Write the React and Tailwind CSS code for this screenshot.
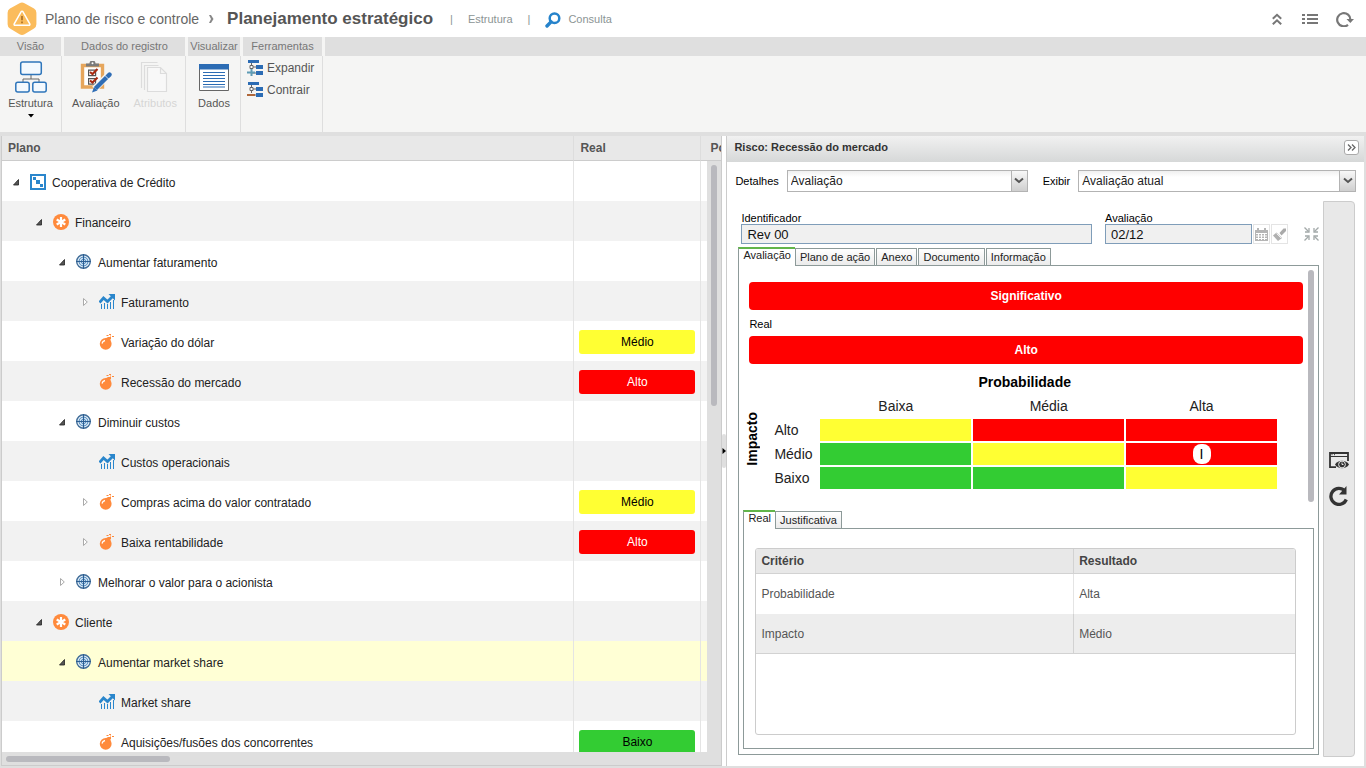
import { useState } from 'react';
import clsx from 'clsx';

const ROWS = [
  { level: 0, toggle: 'open', icon: 'plan', label: 'Cooperativa de Crédito' },
  { level: 1, toggle: 'open', icon: 'perspective', label: 'Financeiro' },
  { level: 2, toggle: 'open', icon: 'goal', label: 'Aumentar faturamento' },
  { level: 3, toggle: 'closed', icon: 'indicator', label: 'Faturamento' },
  { level: 3, icon: 'risk', label: 'Variação do dólar', real: 'Médio' },
  { level: 3, icon: 'risk', label: 'Recessão do mercado', real: 'Alto' },
  { level: 2, toggle: 'open', icon: 'goal', label: 'Diminuir custos' },
  { level: 3, icon: 'indicator', label: 'Custos operacionais' },
  { level: 3, toggle: 'closed', icon: 'risk', label: 'Compras acima do valor contratado', real: 'Médio' },
  { level: 3, toggle: 'closed', icon: 'risk', label: 'Baixa rentabilidade', real: 'Alto' },
  { level: 2, toggle: 'closed', icon: 'goal', label: 'Melhorar o valor para o acionista' },
  { level: 1, toggle: 'open', icon: 'perspective', label: 'Cliente' },
  { level: 2, toggle: 'open', icon: 'goal', label: 'Aumentar market share', selected: true },
  { level: 3, icon: 'indicator', label: 'Market share' },
  { level: 3, icon: 'risk', label: 'Aquisições/fusões dos concorrentes', real: 'Baixo' },
];

const INDENT = ['pl-[8px]', 'pl-[31px]', 'pl-[54px]', 'pl-[77px]'];

const LEVEL_COLORS = {
  Baixo: 'bg-[#33cc33] text-black',
  Médio: 'bg-[#ffff33] text-black',
  Alto: 'bg-[#ff0000] text-white',
};

const MATRIX = [
  { label: 'Alto', cells: ['Médio', 'Alto', 'Alto'] },
  { label: 'Médio', cells: ['Baixo', 'Médio', 'Alto'], mark: 2 },
  { label: 'Baixo', cells: ['Baixo', 'Baixo', 'Médio'] },
];

/* ---------- icons ---------- */

function Svg({ size = 16, width, height, children, className }) {
  const w = width || size;
  const h = height || size;
  return (
    <svg
      width={w}
      height={h}
      viewBox={`0 0 ${w} ${h}`}
      fill="none"
      aria-hidden="true"
      className={clsx('block shrink-0', className)}
    >
      {children}
    </svg>
  );
}

function LogoIcon() {
  return (
    <Svg width={30} height={34}>
      <path
        d="M12.500 1.200a5 5 0 0 1 5 0l9.500 5.400a5 5 0 0 1 2.400 4.300v11.400a5 5 0 0 1-2.400 4.300l-9.500 5.600a5 5 0 0 1-5 0L3 26.600a5 5 0 0 1-2.400-4.300V10.900A5 5 0 0 1 3 6.600z"
        fill="#fbbc5c"
      />
      <path d="M14.200 9.600a1 1 0 0 1 1.700 0l6.900 12.200a1 1 0 0 1-.8 1.500H8a1 1 0 0 1-.8-1.500z" stroke="#fff" strokeWidth="1.500" />
      <path d="M15 14v4.300M15 19.500v1.800" stroke="#b5792a" strokeWidth="1.900" />
    </Svg>
  );
}

function SearchIcon() {
  return (
    <Svg>
      <circle cx="9.500" cy="6.200" r="4.800" stroke="#2683cb" strokeWidth="2.500" />
      <path d="M6 9.800 2 14" stroke="#2683cb" strokeWidth="3.400" strokeLinecap="round" />
    </Svg>
  );
}

function StructureIcon() {
  return (
    <Svg size={32}>
      <path d="M16 14v4M8 21v-3h16v3" stroke="#666" />
      <g fill="#f3f9fe" stroke="#2f76bb" strokeWidth="1.500">
        <rect x="5.700" y="1" width="20.600" height="12.600" rx="2" />
        <rect x=".8" y="21.300" width="13.400" height="9.600" rx="2" />
        <rect x="17.800" y="21.300" width="13.400" height="9.600" rx="2" />
      </g>
    </Svg>
  );
}

function ClipboardIcon() {
  return (
    <Svg size={32}>
      <path d="M2.500 4.500h20v21.500h-20z" fill="#fff" stroke="#e6a65c" strokeWidth="3.400" />
      <path d="M6 5.500h13v-3h-3.500a3 3 0 0 0-6 0H6z" fill="#7b7b7b" />
      <circle cx="12.500" cy="2.200" r="1" fill="#fff" />
      <path d="M8.600 9.100h7v5.500h-7zM8.600 17.600h7v5.500h-7z" fill="#fff" stroke="#555" strokeWidth="1.200" />
      <path d="m10 11 2.500 2 5-5M10 19.500l2.500 2 5-5" stroke="#a92b12" strokeWidth="2.200" />
      <path d="m14.500 28 12.500-12.500" stroke="#f5f5f4" strokeWidth="6.500" />
      <path d="m15.500 27.500 11-11" stroke="#2f6db5" strokeWidth="4.400" />
      <path d="m27.300 15.800 2.200-2.200" stroke="#2f6db5" strokeWidth="4.400" strokeLinecap="round" />
      <path d="m12 31.500 2-5.500 3.500 3.500z" fill="#2f6db5" />
      <path d="m25 14.500 4 4" stroke="#fff" strokeWidth=".8" />
    </Svg>
  );
}

function PagesIcon() {
  return (
    <Svg size={32}>
      <g stroke="#dcdcdc" strokeWidth="1.200">
        <path d="M2.500 27V1.500h16M5.500 29V4.500h14" />
        <path d="M8.500 6.500h13l6 6v18h-19zM21.500 6.500v6h6" fill="#f8f8f8" />
      </g>
    </Svg>
  );
}

function DataIcon() {
  return (
    <Svg size={32}>
      <path d="M1.500 4.500h29v25h-29z" fill="#fff" stroke="#666" />
      <path d="M1 3h30v5.500H1z" fill="#2c6cb4" />
      <path d="M5 11.500h22M5 14.500h22M5 17.500h22M5 20.500h22M5 23.500h22M5 26h22" stroke="#2c6cb4" strokeWidth="1.200" />
    </Svg>
  );
}

function ExpandIcon({ minus }) {
  return (
    <Svg>
      <path d="M1 0h11v3H1zM9 5h7v4H9zM9 11h7v4H9z" fill="#2c6cb4" />
      <path d="M4.500 3v8M4.500 7H9M4.500 13H9" stroke="#666" />
      <path d="M3 5.500h3v3H3z" fill="#fff" stroke="#666" />
      {minus ? (
        <path d="M0 13h8" stroke="#b0673a" strokeWidth="2" />
      ) : (
        <path d="M0 12.500h8M4.500 9v7" stroke="#5f9cb5" strokeWidth="2" />
      )}
    </Svg>
  );
}

function PlanIcon() {
  return (
    <Svg>
      <path d="M1 1h14v14H1z" fill="#fff" stroke="#2a86cc" strokeWidth="2" />
      <path d="M3 3h3v3H3zM6 6h4v4H6zM10 10h3v3h-3z" fill="#2a86cc" />
    </Svg>
  );
}

function PerspectiveIcon() {
  return (
    <Svg>
      <circle cx="8" cy="8" r="8" fill="#ff8a3c" />
      <path d="M8 3v10M3.700 5.500l8.600 5M3.700 10.500l8.600-5" stroke="#fff" strokeWidth="2.200" />
    </Svg>
  );
}

function GoalIcon() {
  return (
    <Svg>
      <circle cx="7.500" cy="7.500" r="6.800" fill="#e4eff8" stroke="#3f6c98" strokeWidth="1.400" />
      <circle cx="7.500" cy="7.500" r="4.500" fill="#c9dff1" stroke="#4b86bd" />
      <circle cx="7.500" cy="7.500" r="2.200" fill="#e4eff8" stroke="#4b86bd" />
      <path d="M7.500 0v15M0 7.500h15" stroke="#2c5e92" />
    </Svg>
  );
}

function IndicatorIcon() {
  return (
    <Svg>
      <path d="m.5 8.500 4-4.500 4 3.500 5-5" stroke="#2a86cc" strokeWidth="2.800" />
      <path d="M9.500 0H16v6.500z" fill="#2a86cc" />
      <path d="M2.500 10v5M5.500 9v6M8.500 10v5M11.500 8v7M14.500 6v9" stroke="#2a86cc" />
    </Svg>
  );
}

function RiskIcon() {
  return (
    <Svg>
      <ellipse cx="6.700" cy="9.800" rx="5.900" ry="5.900" fill="#ff8a3c" />
      <path d="m6.500 4.500 2.500-1.500h2.500v4l-.5 1.500z" fill="#ff8a3c" />
      <path d="M3 9.500a4 4 0 0 1 3-3" stroke="#fff" strokeWidth="1.300" />
      <path d="M11.500 0v1.500M7.500 1.500h2M13 2.500h2M11.500 2.500V5M10 .5h1" stroke="#ff8a3c" />
    </Svg>
  );
}

const TREE_ICONS = {
  plan: PlanIcon,
  perspective: PerspectiveIcon,
  goal: GoalIcon,
  indicator: IndicatorIcon,
  risk: RiskIcon,
};

/* ---------- header ---------- */

function Header() {
  return (
    <header className="flex h-[37px] shrink-0 items-center bg-white pl-[7px] pr-3">
      <LogoIcon />
      <span className="ml-2 text-[14px] leading-4 text-[#666]">Plano de risco e controle</span>
      <Svg width={8} height={10} className="ml-2">
        <path d="M2 1h2l2.500 4L4 9H2l2-4z" fill="#888" />
      </Svg>
      <h1 className="ml-3 text-[17px] font-bold text-[#555]">Planejamento estratégico</h1>
      <nav className="flex items-center pl-[17px] pt-[2px] text-[11px] text-[#8b9494]">
        <span>|</span>
        <a href="#estrutura" className="mx-[15px]">Estrutura</a>
        <span>|</span>
        <a href="#consulta" className="ml-[15px] flex items-center gap-[7px]">
          <SearchIcon />
          Consulta
        </a>
      </nav>
      <div className="ml-auto flex items-center gap-[18px]">
        <button type="button" aria-label="Recolher">
          <Svg width={12} height={12}>
            <path d="m.8 5.800 4.200-4 4.200 4M.8 11.300l4.200-4 4.200 4" stroke="#777" strokeWidth="2" />
          </Svg>
        </button>
        <button type="button" aria-label="Lista">
          <Svg width={16} height={12}>
            <path d="M0 2h3M5 2h11M0 6h3M5 6h11M0 10h3M5 10h11" stroke="#777" strokeWidth="2" />
          </Svg>
        </button>
        <button type="button" aria-label="Atualizar">
          <Svg width={18} height={16}>
            <path d="M12 13.800A6.600 6.600 0 1 1 14.400 9" stroke="#777" strokeWidth="2.200" />
            <path d="M10.500 8H18l-3.700 4z" fill="#777" />
          </Svg>
        </button>
      </div>
    </header>
  );
}

/* ---------- ribbon ---------- */

function RibbonGroup({ title, className, children }) {
  return (
    <section className={clsx('flex flex-col', className)}>
      <h2 className="mr-[3px] h-[19px] bg-[#dfdfdf] text-center text-[11px] leading-[19px] text-[#777]">
        {title}
      </h2>
      <div className="mr-[2px] flex flex-1 border-r border-[#dedede]">{children}</div>
    </section>
  );
}

function RibbonButton({ icon, label, disabled, menu }) {
  return (
    <button
      type="button"
      disabled={disabled}
      className="flex flex-1 flex-col items-center pt-[5px] text-[11px] leading-[14px] text-[#555] disabled:text-[#d5d5d5]"
    >
      {icon}
      <span className="mt-[3px]">{label}</span>
      {menu && (
        <Svg width={6} height={4} className="mt-1">
          <path d="M0 0h6L3 3.500z" fill="#000" />
        </Svg>
      )}
    </button>
  );
}

function Ribbon() {
  return (
    <div className="flex h-[95px] shrink-0 bg-[#f5f5f4]">
      <RibbonGroup title="Visão" className="w-16">
        <RibbonButton icon={<StructureIcon />} label="Estrutura" menu />
      </RibbonGroup>
      <RibbonGroup title="Dados do registro" className="w-[124px]">
        <div className="flex flex-1 pl-[2px]">
          <RibbonButton icon={<ClipboardIcon />} label="Avaliação" />
          <RibbonButton icon={<PagesIcon />} label="Atributos" disabled />
        </div>
      </RibbonGroup>
      <RibbonGroup title="Visualizar" className="w-[55px]">
        <RibbonButton icon={<DataIcon />} label="Dados" />
      </RibbonGroup>
      <RibbonGroup title="Ferramentas" className="w-[82px]">
        <div className="flex flex-col pl-1 pt-px text-[12px] text-[#555]">
          <button type="button" className="flex h-[22px] items-center gap-1">
            <ExpandIcon />
            Expandir
          </button>
          <button type="button" className="flex h-[22px] items-center gap-1">
            <ExpandIcon minus />
            Contrair
          </button>
        </div>
      </RibbonGroup>
      <div className="h-[19px] flex-1 bg-[#dfdfdf]" />
    </div>
  );
}

/* ---------- plan tree ---------- */

function Toggle({ state }) {
  if (!state) return <span className="w-3 shrink-0" />;
  return (
    <button type="button" aria-label={state === 'open' ? 'Contrair' : 'Expandir'} className="w-3 shrink-0 pb-[2px]">
      <Svg width={12} height={10}>
        {state === 'open' ? (
          <path d="M8.500 2.500V8h-5z" fill="#555" stroke="#222" strokeWidth=".8" />
        ) : (
          <path d="M4.500 1.500v7L8.300 5z" fill="#fff" stroke="#aaa" />
        )}
      </Svg>
    </button>
  );
}

function PlanTree() {
  return (
    <section className="ml-px flex min-w-0 flex-[721] flex-col border border-t-0 border-[#ccc] bg-white">
      <div className="relative min-h-0 flex-1 overflow-hidden">
        <table className="w-full table-fixed border-separate border-spacing-0 text-left text-[12px] text-[#222]">
          <colgroup>
            <col />
            <col className="w-[127px]" />
            <col className="w-5" />
          </colgroup>
          <thead>
            <tr className="h-[25px] bg-[#e8e8e8] text-[#555]">
              <th className="border-b border-r border-b-[#ccc] border-r-[#ddd] pl-[6px]">Plano</th>
              <th className="border-b border-r border-b-[#ccc] border-r-[#ddd] pl-[6px]">Real</th>
              <th className="border-b border-[#ccc] pl-[9px]">
                <div className="overflow-hidden">Po</div>
              </th>
            </tr>
          </thead>
          <tbody>
            {ROWS.map((row) => {
              const Icon = TREE_ICONS[row.icon];
              return (
                <tr
                  key={row.label}
                  className={clsx('h-10', row.selected ? 'bg-[#ffffd5]' : 'odd:bg-white even:bg-[#f2f2f2]')}
                >
                  <td className="border-r border-[#e4e4e4]">
                    <div className={clsx('flex items-center whitespace-nowrap pt-[3px]', INDENT[row.level])}>
                      <Toggle state={row.toggle} />
                      <span className="ml-2 mr-[6px] pb-[2px]">
                        <Icon />
                      </span>
                      {row.label}
                    </div>
                  </td>
                  <td className="border-r border-[#e4e4e4] px-[5px]">
                    {row.real && (
                      <div className={clsx('mt-[2px] h-6 rounded-[3px] text-center leading-6', LEVEL_COLORS[row.real])}>
                        {row.real}
                      </div>
                    )}
                  </td>
                  <td />
                </tr>
              );
            })}
          </tbody>
        </table>
        <div className="absolute bottom-0 right-0 top-[25px] w-[14px] bg-[#dfdfdf] pt-1">
          <div className="ml-1 h-[241px] w-[6px] rounded-full bg-[#b9b9be]" />
        </div>
      </div>
      <div className="h-[13px] shrink-0 bg-[#dfdfdf] pl-1 pt-1">
        <div className="h-[6px] w-[164px] rounded-full bg-[#b9b9be]" />
      </div>
    </section>
  );
}

/* ---------- details ---------- */

function SelectBox({ id, value, className }) {
  return (
    <div className={clsx('relative', className)}>
      <select
        id={id}
        defaultValue={value}
        className="block h-[22px] w-full appearance-none border border-[#b3b3b3] bg-linear-to-b from-[#f0f0f0] to-white to-30% pl-[3px] text-[12px] leading-5 text-[#222] outline-none"
      >
        <option>{value}</option>
      </select>
      <span className="pointer-events-none absolute bottom-px right-px top-px flex w-4 items-center justify-center border-l border-[#b3b3b3] bg-linear-to-b from-[#f8f8f8] to-[#cfcfcf]">
        <Svg width={10} height={8}>
          <path d="m1 1.500 4 3.500 4-3.500" stroke="#555" strokeWidth="2" />
        </Svg>
      </span>
    </div>
  );
}

function Tabs({ items, className }) {
  const [active, setActive] = useState(items[0]);
  return (
    <div role="tablist" className={clsx('flex items-end gap-px text-[11px] text-[#222]', className)}>
      {items.map((item) => (
        <button
          key={item}
          type="button"
          role="tab"
          aria-selected={item === active}
          onClick={() => setActive(item)}
          className={clsx(
            'px-1',
            item === active
              ? 'relative -mb-px -mr-px h-[19px] border-l border-t-2 border-l-[#8d9a99] border-t-[#62b54a] bg-white pb-[4px] leading-[13px]'
              : 'h-[17px] border border-b-0 border-[#8d9a99] bg-linear-to-b from-white to-[#ebebeb] leading-[15px]'
          )}
        >
          {item}
        </button>
      ))}
    </div>
  );
}

function RiskMatrix() {
  return (
    <div className="ml-[5px] mr-[39px] mt-[5px]">
      <table className="w-full table-fixed border-separate border-spacing-[2px] text-[14px] leading-[22px] text-[#222]">
        <colgroup>
          <col className="w-6" />
          <col className="w-[46px]" />
          <col />
          <col />
          <col />
        </colgroup>
        <thead>
          <tr className="h-[22px]">
            <td className="p-0" />
            <th colSpan={4} className="p-0 text-black">Probabilidade</th>
          </tr>
        </thead>
        <tbody>
          <tr className="h-[22px]">
            <th rowSpan={4} className="p-0 text-black">
              <span className="-ml-3 inline-block rotate-180 leading-4 [writing-mode:vertical-rl]">Impacto</span>
            </th>
            <td className="p-0" />
            <td className="p-0 text-center">Baixa</td>
            <td className="p-0 text-center">Média</td>
            <td className="p-0 text-center">Alta</td>
          </tr>
          {MATRIX.map((row) => (
            <tr key={row.label} className="h-[22px]">
              <td className="p-0 pl-[2px]">{row.label}</td>
              {row.cells.map((cell, i) => (
                <td key={i} className={clsx('p-0', LEVEL_COLORS[cell])}>
                  {row.mark === i && (
                    <span className="mx-auto block h-5 w-[18px] rounded-lg bg-white text-center leading-5 text-black">
                      I
                    </span>
                  )}
                </td>
              ))}
            </tr>
          ))}
        </tbody>
      </table>
    </div>
  );
}

function CriteriaTable() {
  return (
    <div className="flex-1 overflow-hidden rounded-[3px] border border-[#ccc]">
      <table className="w-full table-fixed border-separate border-spacing-0 text-left text-[12px] text-[#555]">
        <colgroup>
          <col className="w-[59%]" />
          <col />
        </colgroup>
        <thead>
          <tr className="h-[25px] bg-[#e8e8e8] text-[#444]">
            <th className="border-b border-r border-[#d2d2d2] pl-[5px]">Critério</th>
            <th className="border-b border-[#d2d2d2] pl-[5px]">Resultado</th>
          </tr>
        </thead>
        <tbody>
          <tr className="h-10">
            <td className="border-r border-[#e4e4e4] pl-[5px]">Probabilidade</td>
            <td className="pl-[5px]">Alta</td>
          </tr>
          <tr className="h-10 bg-[#ededed]">
            <td className="border-b border-r border-[#d2d2d2] pl-[5px]">Impacto</td>
            <td className="border-b border-[#d2d2d2] pl-[5px]">Médio</td>
          </tr>
        </tbody>
      </table>
    </div>
  );
}

function RevisionFields() {
  const field =
    'block h-5 w-full border border-[#7f9db9] bg-[#f0f0f0] pl-[5px] text-[13px] text-[#111] outline-none';
  return (
    <div className="flex items-end pl-[3px] text-[11px] leading-3 text-black">
      <div className="min-w-0 flex-1">
        <label htmlFor="identificador" className="block">Identificador</label>
        <input id="identificador" readOnly defaultValue="Rev 00" className={field} />
      </div>
      <div className="ml-[13px] w-[147px]">
        <label htmlFor="data" className="block">Avaliação</label>
        <input id="data" readOnly defaultValue="02/12" className={field} />
      </div>
      <button type="button" aria-label="Calendário" className="ml-px flex h-5 w-[17px] items-center justify-center border border-[#e4e4e4]">
        <Svg width={13} height={13}>
          <path d="M0 2h13v11H0z" fill="#b5b5b5" />
          <path d="M3 0v3M10 0v3" stroke="#b5b5b5" strokeWidth="2" />
          <path d="M1 5.500h11M1 8h11M1 10.500h11M3.500 5v7M6.500 5v7M9.500 5v7" stroke="#fff" />
        </Svg>
      </button>
      <button type="button" aria-label="Limpar" className="ml-px flex h-5 w-[17px] items-center justify-center border border-[#e4e4e4]">
        <Svg width={13} height={13}>
          <path d="m6.500 5 4-4.500H13V3L8.500 7.500z" fill="#aaa" />
          <path d="m3.500 4.500 5.500 5.500L5 13 0 7.500z" fill="#b0b0b0" />
          <path d="m3.500 5.500 4.500 4.500" stroke="#fff" strokeWidth=".8" />
        </Svg>
      </button>
      <button type="button" aria-label="Reduzir" className="ml-4 flex h-5 items-center">
        <Svg width={15} height={14}>
          <path d="m.5.500 4 4M14.500.5l-4 4M.5 13.500l4-4M14.500 13.500l-4-4" stroke="#a3a9a9" strokeWidth="1.300" />
          <path d="M1 5h4V1M14 5h-4V1M1 9h4v4M14 9h-4v4" stroke="#a3a9a9" strokeWidth="1.300" />
        </Svg>
      </button>
    </div>
  );
}

function SideBar() {
  return (
    <aside className="flex w-8 shrink-0 flex-col items-center justify-center gap-4 rounded-r-[4px] border border-[#ccc] bg-[#e8e8e8]">
      <button type="button" aria-label="Visualizar">
        <Svg width={20} height={18}>
          <path d="M7 15.200H1V1h18v8" stroke="#333" strokeWidth="1.800" />
          <path d="M1 4.500h18" stroke="#333" />
          <path d="M2.500 2.700h1M5 2.700h1" stroke="#333" />
          <path d="M6 12.500c3-5 11-5 14 0-3 5-11 5-14 0z" fill="#333" />
          <circle cx="13" cy="12.500" r="3.400" fill="#333" stroke="#e8e8e8" />
          <path d="M13 10.500v2h1.500" stroke="#e8e8e8" />
        </Svg>
      </button>
      <button type="button" aria-label="Atualizar">
        <Svg size={20}>
          <path d="M17.300 13.500a8 8 0 1 1-1.500-8.500" stroke="#333" strokeWidth="3.300" />
          <path d="M17.500 0v8.500H10z" fill="#333" />
        </Svg>
      </button>
    </aside>
  );
}

function RiskDetails() {
  return (
    <section className="flex min-w-0 flex-[638] flex-col border-l border-[#ccc] bg-white text-black">
      <header className="flex h-[26px] shrink-0 items-center bg-linear-to-b from-[#f1f1f1] to-[#d6d8d8] pl-[7px] pr-[5px]">
        <h2 className="pb-[3px] text-[11px] font-bold text-[#333]">Risco: Recessão do mercado</h2>
        <button
          type="button"
          aria-label="Ocultar"
          className="mb-[3px] ml-auto flex h-[15px] w-[15px] items-center justify-center rounded-[3px] border border-[#aaa] bg-white"
        >
          <Svg width={9} height={7}>
            <path d="m1 .5 3 3-3 3M5 .5l3 3-3 3" stroke="#666" strokeWidth="1.300" />
          </Svg>
        </button>
      </header>

      <div className="flex shrink-0 items-center pl-2 pr-2 pt-2 text-[11px]">
        <label htmlFor="detalhes">Detalhes</label>
        <SelectBox id="detalhes" value="Avaliação" className="ml-2 flex-[241]" />
        <label htmlFor="exibir" className="ml-[15px]">Exibir</label>
        <SelectBox id="exibir" value="Avaliação atual" className="ml-2 flex-[278]" />
      </div>

      <div className="flex min-h-0 flex-1 gap-1 pb-[9px] pl-[11px] pr-[9px] pt-[9px]">
        <div className="flex min-w-0 flex-1 flex-col pb-[2px] pt-[11px]">
          <RevisionFields />
          <Tabs
            items={['Avaliação', 'Plano de ação', 'Anexo', 'Documento', 'Informação']}
            className="mt-[3px]"
          />
          <div className="flex min-h-0 flex-1 flex-col border border-[#8d9a99] pb-[5px]">
            <div className="flex">
              <div className="min-w-0 flex-1 pl-[10px] pt-4 text-[12px] font-bold leading-7 text-white">
                <div className="rounded-[4px] bg-[#ff0000] text-center">Significativo</div>
                <p className="mb-1 mt-[7px] text-[11px] font-normal leading-[15px] text-black">Real</p>
                <div className="rounded-[4px] bg-[#ff0000] text-center">Alto</div>
              </div>
              <div className="relative w-[15px]">
                <div className="absolute left-[5px] top-1 h-[232px] w-[6px] rounded-full bg-[#b9b9be]" />
              </div>
            </div>
            <RiskMatrix />
            <Tabs items={['Real', 'Justificativa']} className="mx-1 mt-[19px]" />
            <div className="mx-1 flex min-h-0 flex-1 border border-[#8d9a99] pb-[13px] pl-[11px] pr-[17px] pt-[19px]">
              <CriteriaTable />
            </div>
          </div>
        </div>
        <SideBar />
      </div>
    </section>
  );
}

export default function App() {
  return (
    <div className="flex h-screen flex-col bg-[#dfdfdf] font-['Liberation_Sans',Arial,sans-serif]">
      <Header />
      <Ribbon />
      <main className="flex min-h-0 flex-1 pb-[2px] pr-[2px] pt-1">
        <PlanTree />
        <button
          type="button"
          aria-label="Redimensionar painel"
          className="flex w-[4px] shrink-0 items-center bg-white"
        >
          <span className="flex h-[34px] w-[4px] items-center rounded-[2px] bg-[#dfdfdf]">
            <Svg width={4} height={6}>
              <path d="M.5 0v6L4 3z" fill="#000" />
            </Svg>
          </span>
        </button>
        <RiskDetails />
      </main>
    </div>
  );
}
